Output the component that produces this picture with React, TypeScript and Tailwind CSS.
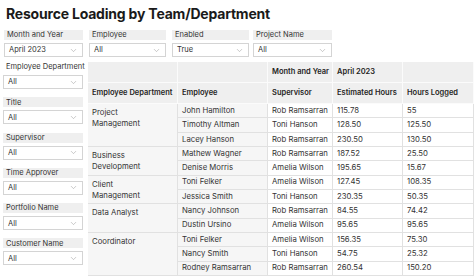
import { ChevronDown } from 'lucide-react';

const font = { fontFamily: 'Inter, "Liberation Sans", sans-serif' };

function Dropdown({ value, className = '' }: { value: string; className?: string }) {
  return (
    <div className={`h-[14px] bg-white border border-[#d4d4d4] flex items-center justify-between pl-[4px] pr-[4px] text-[7.5px] text-[#333] ${className}`}>
      <span>{value}</span>
      <ChevronDown className="w-[9px] h-[9px] text-[#a0a0a0]" strokeWidth={1.5} />
    </div>
  );
}

function Filter({ label, value, width, plain }: { label: string; value: string; width: string; plain?: boolean }) {
  return (
    <div className={width}>
      <div className={`h-[10px] flex items-center pl-[3px] text-[7.5px] text-[#333] leading-none whitespace-nowrap ${plain ? '' : 'bg-[#efefef]'}`}>
        {label}
      </div>
      <Dropdown value={value} className="mt-[3px]" />
    </div>
  );
}

const groups = [
  {
    dept: ['Project', 'Management'],
    rows: [
      ['John Hamilton', 'Rob Ramsarran', '115.78', '55'],
      ['Timothy Altman', 'Toni Hanson', '128.50', '125.50'],
      ['Lacey Hanson', 'Rob Ramsarran', '230.50', '130.50'],
    ],
  },
  {
    dept: ['Business', 'Development'],
    rows: [
      ['Mathew Wagner', 'Rob Ramsarran', '187.52', '25.50'],
      ['Denise Morris', 'Amelia Wilson', '195.65', '15.67'],
    ],
  },
  {
    dept: ['Client', 'Management'],
    rows: [
      ['Toni Felker', 'Amelia Wilson', '127.45', '108.35'],
      ['Jessica Smith', 'Toni Hanson', '230.35', '50.35'],
    ],
  },
  {
    dept: ['Data Analyst'],
    rows: [
      ['Nancy Johnson', 'Rob Ramsarran', '84.55', '74.42'],
      ['Dustin Ursino', 'Amelia Wilson', '95.65', '95.65'],
    ],
  },
  {
    dept: ['Coordinator'],
    rows: [
      ['Toni Felker', 'Amelia Wilson', '156.35', '75.30'],
      ['Nancy Smith', 'Toni Hanson', '54.75', '25.32'],
      ['Rodney Ramsarran', 'Rob Ramsarran', '260.54', '150.20'],
    ],
  },
];

const spans: Record<number, string> = { 1: 'row-span-1', 2: 'row-span-2', 3: 'row-span-3' };

export default function App() {
  const head = 'bg-[#efefef] border-r border-b border-[#fbfbfb] flex items-center pl-[4px] font-semibold text-[7.5px] text-[#252423]';
  const cell = 'border-r border-b border-[#e1e1e1] flex items-center pl-[4px] text-[7.75px] text-[#333] whitespace-nowrap';

  return (
    <div className="w-[474px] h-[278px] overflow-hidden bg-white" style={font}>
      <h1 className="pl-[6px] pt-[5px] h-[30px] text-[14px] font-bold text-[#1a1a1a] leading-[18px] tracking-[-0.2px]">
        Resource Loading by Team/Department
      </h1>

      <div className="flex pl-[4px]">
        <Filter label="Month and Year" value="April 2023" width="w-[79px]" />
        <Filter label="Employee" value="All" width="w-[77px] ml-[6px]" />
        <Filter label="Enabled" value="True" width="w-[77px] ml-[6px]" />
        <Filter label="Project Name" value="All" width="w-[79px] ml-[4px]" />
      </div>

      <div className="flex mt-[5px]">
        <div className="w-[80px] ml-[3px] flex flex-col gap-[8.3px]">
          <Filter label="Employee Department" value="All" width="w-[80px]" plain />
          <Filter label="Title" value="All" width="w-[80px]" />
          <Filter label="Supervisor" value="All" width="w-[80px]" />
          <Filter label="Time Approver" value="All" width="w-[80px]" />
          <Filter label="Portfolio Name" value="All" width="w-[80px]" />
          <Filter label="Customer Name" value="All" width="w-[80px]" />
        </div>

        <div className="ml-[5px] grid grid-cols-[90px_90px_65px_70px_71px] grid-rows-[21px_21px_repeat(12,14.33px)]">
          <div className={head}></div>
          <div className={head}></div>
          <div className={head}>Month and Year</div>
          <div className={head}>April 2023</div>
          <div className={head}></div>

          <div className={head}>Employee Department</div>
          <div className={head}>Employee</div>
          <div className={head}>Supervisor</div>
          <div className={head}>Estimated Hours</div>
          <div className={head}>Hours Logged</div>

          {groups.map((g) => (
            <>
              <div
                key={g.dept.join(' ')}
                className={`${spans[g.rows.length]} bg-[#f6f6f6] border-r border-b border-[#e1e1e1] pl-[4px] pt-[3px] text-[7.75px] leading-[11px] text-[#333]`}
                style={{ gridColumn: 1 }}
              >
                {g.dept.map((d) => (
                  <div key={d}>{d}</div>
                ))}
              </div>
              {g.rows.map((r, i) => (
                <>
                  <div key={`e${i}`} className={`${cell} bg-[#f6f6f6]`} style={{ gridColumn: 2 }}>{r[0]}</div>
                  <div key={`s${i}`} className={cell}>{r[1]}</div>
                  <div key={`h${i}`} className={cell}>{r[2]}</div>
                  <div key={`l${i}`} className={cell}>{r[3]}</div>
                </>
              ))}
            </>
          ))}
        </div>
      </div>
    </div>
  );
}
